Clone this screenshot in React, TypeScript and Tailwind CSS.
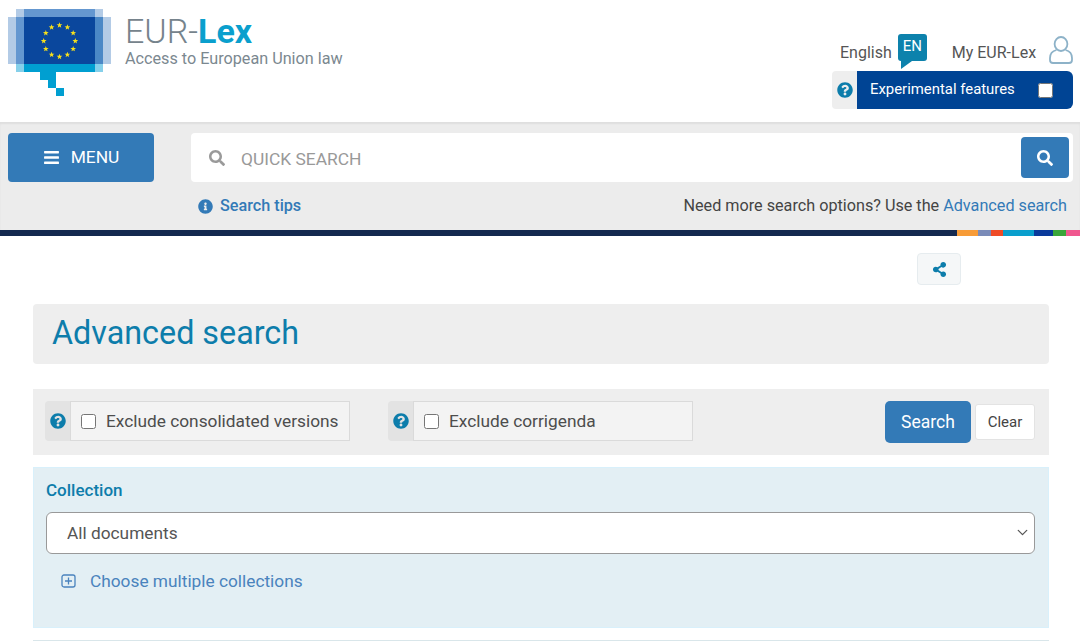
import { FaBars, FaSearch, FaInfoCircle, FaQuestionCircle, FaShareAlt } from 'react-icons/fa';
import { ChevronDown } from 'lucide-react';

const ROBOTO = "font-['Roboto','Liberation_Sans',sans-serif]";

const Logo = () => {
  // 12 stars around the circle
  const stars = Array.from({ length: 12 }, (_, i) => {
    const a = (i * Math.PI) / 6;
    const cx = 59.5 + 15.8 * Math.sin(a);
    const cy = 41 - 15.8 * Math.cos(a);
    const pts = Array.from({ length: 10 }, (_, k) => {
      const r = k % 2 === 0 ? 3 : 1.25;
      const t = (k * Math.PI) / 5;
      return `${cx + r * Math.sin(t)},${cy - r * Math.cos(t)}`;
    }).join(' ');
    return <polygon key={i} points={pts} fill="#f7e01b" />;
  });
  return (
    <svg width="112" height="97" viewBox="0 0 112 97" className="shrink-0">
      <rect x="8" y="17" width="103" height="47" fill="#b3cbe6" />
      <rect x="16" y="9" width="87" height="55" fill="#b3cbe6" />
      <rect x="24" y="9" width="71" height="8" fill="#6497d0" />
      <rect x="16" y="17" width="8" height="47" fill="#6497d0" />
      <rect x="95" y="17" width="8" height="47" fill="#4b88c6" />
      <rect x="24" y="17" width="71" height="47" fill="#0a479d" />
      <rect x="16" y="64" width="87" height="8" fill="#86d0ea" />
      <rect x="24" y="64" width="71" height="8" fill="#009fd1" />
      <rect x="40" y="72" width="16" height="8" fill="#009fd1" />
      <rect x="48" y="80" width="8" height="8" fill="#009fd1" />
      <rect x="56" y="88" width="8" height="8" fill="#009fd1" />
      {stars}
    </svg>
  );
};

const UserIcon = () => (
  <svg width="24" height="28" viewBox="0 0 24 28" fill="none" stroke="#8db2c8" strokeWidth="1.8">
    <ellipse cx="12" cy="8" rx="6.4" ry="7" />
    <path d="M7.5 14 C3.5 15 1 18 1 22 V24 C1 26 2.5 27 4 27 H20 C21.5 27 23 26 23 24 V22 C23 18 20.5 15 16.5 14" />
  </svg>
);

const LangBubble = () => (
  <div className="relative w-[29px] h-[27px] bg-[#0d82ac] rounded-[3px] flex items-start justify-center text-white text-[15px] leading-[24px]">
    EN
    <svg width="12" height="8" viewBox="0 0 12 8" className="absolute left-[2px] top-[27px]">
      <polygon points="1,0 12,0 1,8" fill="#0d82ac" />
    </svg>
  </div>
);

const PlusSquare = () => (
  <svg width="15" height="14" viewBox="0 0 15 14" fill="none" stroke="#4a83bd" strokeWidth="1.3">
    <rect x="1" y="1" width="13" height="12" rx="2" />
    <path d="M7.5 3.5 V10.5 M4 7 H11" />
  </svg>
);

const ExcludeOption = ({ label, width }: { label: string; width: string }) => (
  <div className="flex h-10 rounded-sm">
    <div className="w-[25px] bg-[#e3e3e3] flex items-center justify-center rounded-l-sm">
      <FaQuestionCircle className="text-[#0d7dab]" size={16} />
    </div>
    <label className={`${width} bg-[#f3f3f3] border border-[#dadada] flex items-center pl-[10px] gap-[10px] text-[17.3px] text-[#4d4d4d]`}>
      <input type="checkbox" className="w-[15px] h-[15px] m-0" />
      <span className="mt-[2px]">{label}</span>
    </label>
  </div>
);

export default function App() {
  return (
    <div className={`${ROBOTO} w-[1080px] h-[644px] overflow-hidden bg-white text-[#444]`}>
      {/* Top header */}
      <header className="h-[122px] flex justify-between pr-[7px]">
        <div className="flex gap-[13px]">
          <Logo />
          <div className="pt-[12px]">
            <div className="text-[34px] leading-[38px] text-[#76838c] font-light">
              EUR-<span className="font-bold text-[#0a9fcd]">Lex</span>
            </div>
            <div className="text-[16.2px] leading-[16px] mt-[1px] text-[#7b8890]">Access to European Union law</div>
          </div>
        </div>
        <div className="w-[241px] pt-[34px] flex flex-col items-end">
          <div className="h-[37px] flex items-start text-[16px] text-[#555] w-full pl-[8px] whitespace-nowrap">
            <span className="mt-[7px]">English</span>
            <span className="ml-[6px] shrink-0"><LangBubble /></span>
            <span className="mt-[7px] ml-[25px]">My EUR-Lex</span>
            <span className="ml-[13px] mt-[2px] shrink-0"><UserIcon /></span>
          </div>
          <div className="flex h-[38px] w-full">
            <div className="w-[25px] bg-[#eeeeee] rounded-l-sm flex items-center justify-center">
              <FaQuestionCircle className="text-[#0d7dab]" size={16} />
            </div>
            <label className="flex-1 bg-[#004494] rounded-r-[6px] flex items-center justify-between pl-[13px] pr-[20px] pb-[2px] text-[14.9px] text-white">
              Experimental features
              <input type="checkbox" className="w-[15px] h-[15px] m-0 mt-[2px]" />
            </label>
          </div>
        </div>
      </header>

      {/* Search band */}
      <section className="h-[108px] bg-[#ececec] shadow-[inset_0_2px_2px_rgba(0,0,0,0.06)] pt-[11px] pl-[8px] pr-[7px]">
        <div className="flex gap-[37px]">
          <button className="w-[146px] h-[49px] bg-[#337ab7] rounded-[4px] text-white text-[17.4px] flex items-center justify-center gap-[11px]">
            <FaBars size={17} />
            MENU
          </button>
          <div className="flex-1 h-[49px] bg-white rounded-[4px] flex items-center pl-[18px] pr-[4px]">
            <FaSearch className="text-[#9a9a9a]" size={16} />
            <span className="ml-[16px] mt-[3px] text-[17.4px] text-[#999]">QUICK SEARCH</span>
            <button className="ml-auto w-[48px] h-[41px] bg-[#337ab7] rounded-[4px] flex items-center justify-center text-white">
              <FaSearch size={16} />
            </button>
          </div>
        </div>
        <div className="flex justify-between items-center mt-[12px] pl-[190px] pr-[6px] text-[16.2px] leading-[24px]">
          <a className="flex items-center gap-[7px] text-[#337ab7] font-medium">
            <FaInfoCircle size={15} />
            Search tips
          </a>
          <p className="text-[#444]">
            Need more search options? Use the <a className="text-[#337ab7]">Advanced search</a>
          </p>
        </div>
      </section>

      {/* Dark bar with colour strip */}
      <div className="h-[6px] flex bg-[#14294f]">
        <div className="flex-1" />
        <div className="w-[21px] bg-[#f79b37]" />
        <div className="w-[13px] bg-[#7a8bb8]" />
        <div className="w-[12px] bg-[#ef4b27]" />
        <div className="w-[31px] bg-[#0a9fcd]" />
        <div className="w-[19px] bg-[#0a3a9b]" />
        <div className="w-[13px] bg-[#3aa53a]" />
        <div className="w-[14px] bg-[#f0578f]" />
      </div>

      <main className="pl-[33px] pr-[31px]">
        <div className="flex justify-end pr-[88px] pt-[17px]">
          <button className="w-[44px] h-[32px] bg-[#f5f7f8] border border-[#e6ecef] rounded-[4px] flex items-center justify-center text-[#0d7dab]">
            <FaShareAlt size={15} />
          </button>
        </div>

        <div className="mt-[19px] h-[60px] bg-[#eeeeee] rounded-[4px] pl-[19px] pb-[1px] flex items-center">
          <h1 className="text-[32.3px] text-[#0d7dab]">Advanced search</h1>
        </div>

        <div className="mt-[25px] h-[66px] bg-[#eeeeee] flex items-center pl-[12px] pr-[14px]">
          <div className="mb-[2px]">
            <ExcludeOption label="Exclude consolidated versions" width="w-[280px]" />
          </div>
          <div className="ml-[38px] mb-[2px]">
            <ExcludeOption label="Exclude corrigenda" width="w-[280px]" />
          </div>
          <button className="ml-auto w-[86px] h-[42px] bg-[#337ab7] rounded-[5px] text-white text-[17.5px]">Search</button>
          <button className="ml-[4px] w-[60px] h-[36px] bg-white border border-[#e3e3e3] rounded-[3px] text-[15px] text-[#444]">Clear</button>
        </div>

        <div className="mt-[12px] h-[161px] bg-[#e3eff4] border border-[#d8f0fb] pl-[12px] pr-[13px] pt-[12px]">
          <div className="text-[17px] leading-[20px] font-medium text-[#0d7dab]">Collection</div>
          <div className="relative mt-[12px]">
            <select className="appearance-none w-full h-[42px] bg-white border border-[#999] rounded-[6px] pl-[20px] pt-[2px] text-[17.3px] text-[#555]">
              <option>All documents</option>
            </select>
            <ChevronDown className="absolute right-[4px] top-[12px] text-[#555]" size={17} strokeWidth={1.8} />
          </div>
          <div className="flex items-center mt-[16px] pl-[15px] gap-[14px] text-[17.3px] leading-[22px] text-[#4a83bd]">
            <PlusSquare />
            Choose multiple collections
          </div>
        </div>

        <div className="mt-[12px] border-t border-[#d9e6ea]" />
      </main>
    </div>
  );
}
